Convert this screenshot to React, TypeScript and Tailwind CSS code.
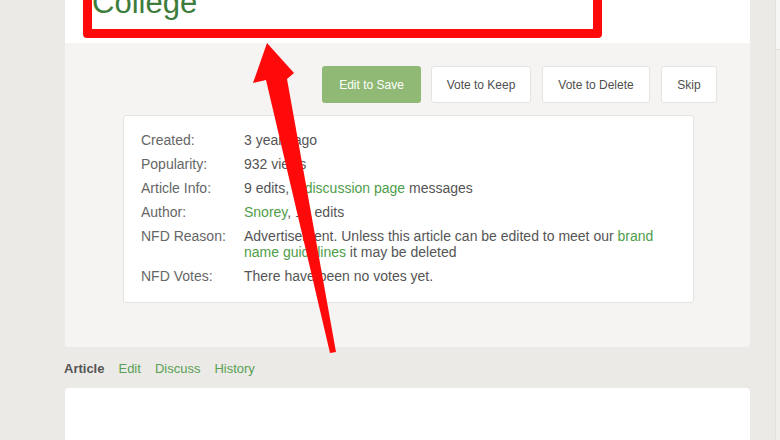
import React from "react";

const rows: { label: string; value: React.ReactNode }[] = [
  { label: "Created:", value: "3 years ago" },
  { label: "Popularity:", value: "932 views" },
  {
    label: "Article Info:",
    value: (
      <>
        9 edits, 1 <span className="text-[#4f9d4a]">discussion page</span> messages
      </>
    ),
  },
  {
    label: "Author:",
    value: (
      <>
        <span className="text-[#4f9d4a]">Snorey</span>, 18 edits
      </>
    ),
  },
  {
    label: "NFD Reason:",
    value: (
      <>
        Advertisement. Unless this article can be edited to meet our{" "}
        <span className="text-[#4f9d4a]">brand name guidelines</span> it may be deleted
      </>
    ),
  },
  { label: "NFD Votes:", value: "There have been no votes yet." },
];

export default function App() {
  return (
    <div
      className="relative w-[780px] h-[440px] overflow-hidden bg-[#ebeae6] flex"
      style={{ fontFamily: '"Liberation Sans", Arial, sans-serif' }}
    >
      <div className="w-[65px] shrink-0" />
      <div className="w-[685px] shrink-0 flex flex-col">
        {/* header */}
        <div className="h-[43px] bg-white overflow-hidden shrink-0">
          <div className="ml-[18px] mt-[-22px] w-[519px] h-[60px] border-[9px] border-[#ff0a0a] rounded-[4px] bg-white">
            <div className="text-[31px] leading-[31px] mt-[0px] text-[#3d7d3b]">College</div>
          </div>
        </div>
        {/* gray panel */}
        <div className="h-[304px] shrink-0 bg-[#f5f4f2] rounded-b-[4px] flex flex-col">
          <div className="flex justify-end pr-[33px] pt-[23px]">
            <div className="flex gap-[10px] text-[12px]">
              <div className="w-[99px] h-[37px] rounded-[3px] bg-[#8fb974] text-white flex items-center justify-center">
                Edit to Save
              </div>
              <div className="w-[100px] h-[37px] rounded-[3px] bg-white border border-[#e6e4e0] text-[#4f4f4f] flex items-center justify-center">
                Vote to Keep
              </div>
              <div className="w-[108px] h-[37px] rounded-[3px] bg-white border border-[#e6e4e0] text-[#4f4f4f] flex items-center justify-center ml-[1px]">
                Vote to Delete
              </div>
              <div className="w-[56px] h-[37px] rounded-[3px] bg-white border border-[#e6e4e0] text-[#4f4f4f] flex items-center justify-center ml-[1px]">
                Skip
              </div>
            </div>
          </div>
          <div className="ml-[58px] mt-[12px] w-[571px] h-[188px] bg-white border border-[#e5e3df] rounded-[3px] pt-[16px] pl-[17px] flex flex-col gap-[8px] text-[14px] leading-[16px] text-[#555]">
            {rows.map((r) => (
              <div key={r.label} className="flex">
                <div className="w-[103px] shrink-0 text-[#666]">{r.label}</div>
                <div className="w-[425px]">{r.value}</div>
              </div>
            ))}
          </div>
        </div>
        {/* tabs */}
        <div className="h-[41px] shrink-0 flex items-center gap-[14px] ml-[-1px] text-[13px] pt-[2px]">
          <span className="font-bold text-[#555]">Article</span>
          <span className="text-[#5a9f55]">Edit</span>
          <span className="text-[#5a9f55]">Discuss</span>
          <span className="text-[#5a9f55]">History</span>
        </div>
        <div className="flex-1 bg-white rounded-t-[4px]" />
      </div>
      <div className="w-[25px] shrink-0" />
      <div className="w-[5px] shrink-0 flex flex-col border-l border-[#e2e0dc]">
        <div className="h-[50px] bg-[#f7f7f5] border-b border-[#e2e0dc]" />
        <div className="flex-1 bg-[#f0efec]" />
      </div>

      {/* red arrow overlay */}
      <svg
        className="absolute inset-0 pointer-events-none"
        width="780"
        height="440"
        viewBox="0 0 780 440"
      >
        <polygon
          points="267,43 294,73 287,79 336,352 330,353 266,80 253,83"
          fill="#ff0a0a"
        />
      </svg>
    </div>
  );
}
